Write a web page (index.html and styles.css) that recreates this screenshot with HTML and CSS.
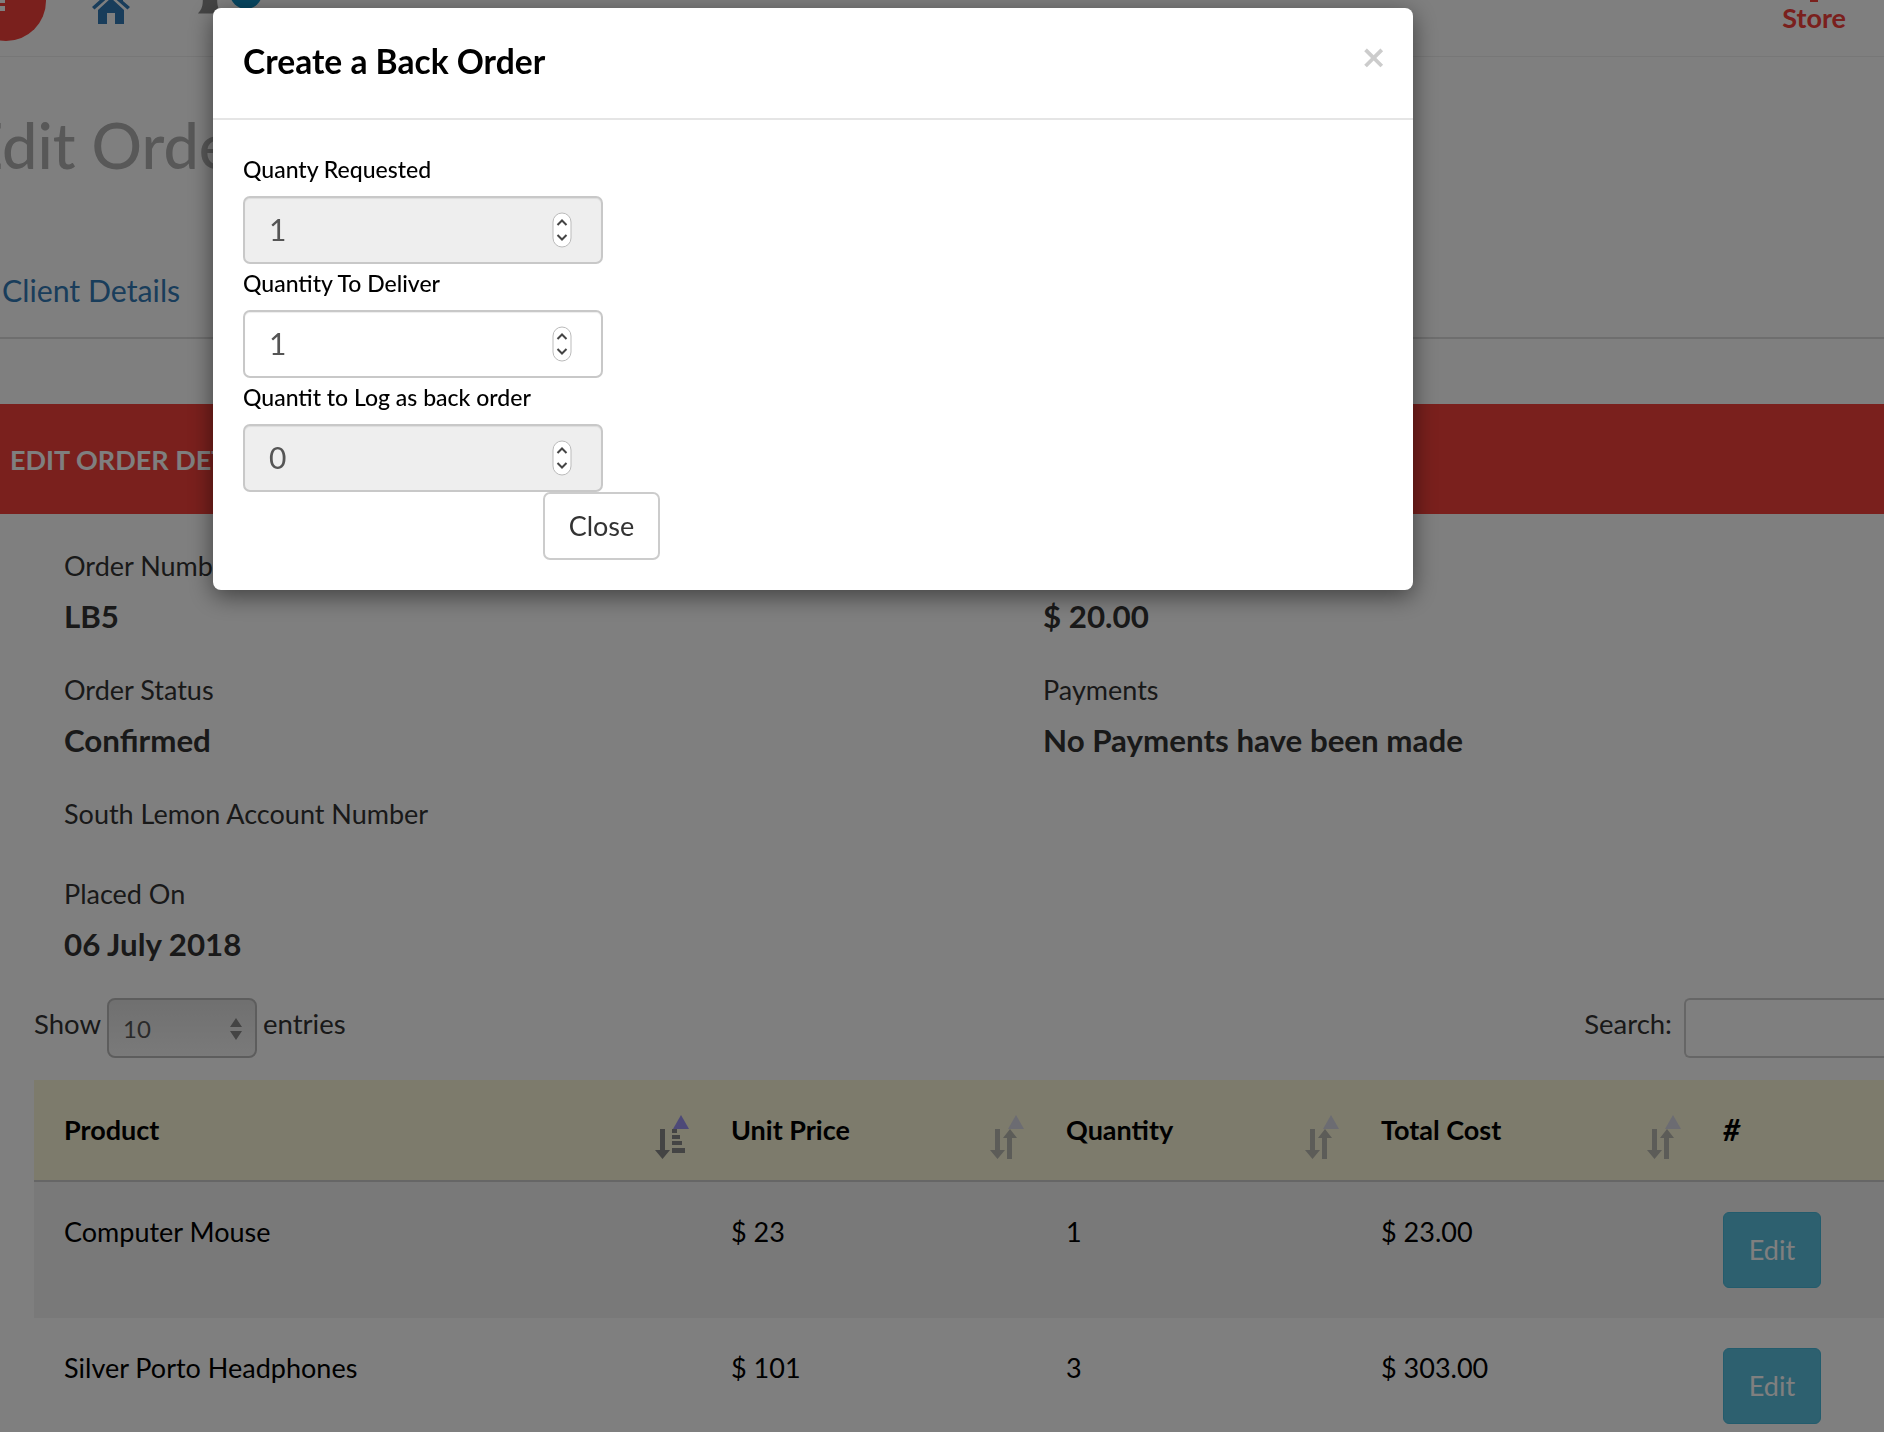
FILE: index.html
```html
<!DOCTYPE html>
<html lang="en">
<head>
<meta charset="utf-8">
<title>Edit Order</title>
<link rel="stylesheet" href="styles.css">
</head>
<body>
<div class="page">
  <header class="topbar">
    <div class="menu-btn"><span></span><span></span></div>
    <svg class="home" viewBox="0 0 38 34"><path fill="#337ab7" d="M19 0 0 17l2.500 2.500L19 5l16.500 14.500L38 17l-7-6V2h-5v4.500zM6 20v14h9V23h8v11h9V20L19 8z"/></svg>
    <svg class="bell" viewBox="0 0 30 40"><path fill="#8a8a8a" d="M15 0c-6 0-9 5-9 12 0 9-3 13-6 16h30c-3-3-6-7-6-16 0-7-3-12-9-12z"/></svg>
    <div class="badge"></div>
    <div class="store">Store</div>
  </header>

  <h1 class="page-title">Edit Order</h1>
  <nav class="tabs"><a class="tab">Client Details</a></nav>
  <div class="band">EDIT ORDER DETAILS</div>

  <section class="details">
    <div class="field"><div class="field-label">Order Number</div><div class="field-value">LB5</div></div>
    <div class="field"><div class="field-label">Order Total</div><div class="field-value">$ 20.00</div></div>
    <div class="field"><div class="field-label">Order Status</div><div class="field-value">Confirmed</div></div>
    <div class="field"><div class="field-label">Payments</div><div class="field-value">No Payments have been made</div></div>
    <div class="field field-empty"><div class="field-label">South Lemon Account Number</div></div>
    <div class="field field-wide"><div class="field-label">Placed On</div><div class="field-value">06 July 2018</div></div>
  </section>

  <div class="dt-controls">
    <label class="dt-length"><span class="dt-text">Show</span>
      <span class="select-wrap">
        <select class="select"><option>10</option></select>
        <svg class="select-arrows" viewBox="0 0 12 22"><path fill="#888" d="M6 0l6 9H0zM6 22l6-9H0z"/></svg>
      </span>
      <span class="dt-text">entries</span></label>
    <label class="dt-search"><span class="dt-text">Search:</span> <input class="search-input" type="text"></label>
  </div>

  <table class="orders">
    <colgroup><col class="c1"><col class="c2"><col class="c3"><col class="c4"><col class="c5"></colgroup>
    <thead>
      <tr>
        <th>Product
          <svg class="sort" viewBox="0 0 36 44"><path fill="#9a92f0" d="M26 0l8 14H18z"/><path fill="#888" d="M5 14h5v21h5L7.500 44 0 35h5z"/><path fill="#888" d="M17 14h5v4h-5zM17 20h8v4h-8zM17 26h10v4H17zM17 33h13v5H17z"/></svg>
        </th>
        <th>Unit Price <svg class="sort" viewBox="0 0 36 44"><use href="#s"/></svg></th>
        <th>Quantity <svg class="sort" viewBox="0 0 36 44"><use href="#s"/></svg></th>
        <th>Total Cost <svg class="sort" viewBox="0 0 36 44"><use href="#s"/></svg></th>
        <th class="hash">#</th>
      </tr>
    </thead>
    <tbody>
      <tr class="odd"><td>Computer Mouse</td><td>$ 23</td><td>1</td><td>$ 23.00</td><td><button class="edit">Edit</button></td></tr>
      <tr><td>Silver Porto Headphones</td><td>$ 101</td><td>3</td><td>$ 303.00</td><td><button class="edit">Edit</button></td></tr>
    </tbody>
  </table>
  <svg class="defs" width="0" height="0"><defs><g id="s"><path fill="#d8d8e4" d="M26 0l8 14H18z"/><path fill="#b8b8b0" d="M5 14h5v21h5L7.500 44 0 35h5zM22 44h-5V23h-4l7-9 7 9h-5z"/></g></defs></svg>
</div>

<div class="backdrop"></div>

<div class="modal">
  <div class="modal-header">
    <h4 class="modal-title">Create a Back Order</h4>
    <span class="close">×</span>
  </div>
  <div class="modal-body">
    <label class="label">Quanty Requested</label>
    <div class="num"><input class="input" type="text" value="1" disabled><svg class="spin" viewBox="0 0 20 36"><use href="#pill"/></svg></div>
    <label class="label">Quantity To Deliver</label>
    <div class="num"><input class="input" type="text" value="1"><svg class="spin" viewBox="0 0 20 36"><use href="#pill"/></svg></div>
    <label class="label">Quantit to Log as back order</label>
    <div class="num"><input class="input" type="text" value="0" disabled><svg class="spin" viewBox="0 0 20 36"><use href="#pill"/></svg></div>
    <div class="actions"><button class="btn-close">Close</button></div>
  </div>
  <svg class="defs" width="0" height="0"><defs><g id="pill"><rect x="1" y="1" width="18" height="34" rx="9" fill="#fff" stroke="#bbb"/><path fill="none" stroke="#444" stroke-width="2" d="M5.500 13 10 8.500l4.500 4.500M5.500 23l4.500 4.500 4.500-4.500"/></g></defs></svg>
</div>
</body>
</html>
```
FILE: styles.css
```css
* { box-sizing: border-box; }
html, body { margin: 0; height: 100%; overflow: hidden; }
body { font-family: Lato, "Open Sans", sans-serif; font-size: 24px; color: #333; background: #fff; }
.page { width: 1884px; height: 1432px; overflow: hidden; }

.topbar { display: flex; align-items: flex-end; height: 57px; border-bottom: 1px solid #eee; overflow: hidden; padding-bottom: 32px; }
.menu-btn { flex: none; width: 80px; height: 80px; margin-left: -34px; margin-bottom: -17px; border-radius: 50%; background: #f4403a; display: flex; flex-direction: column; justify-content: flex-end; gap: 3px; padding: 0 0 30px 20px; }
.menu-btn span { display: block; width: 19px; height: 5px; background: #fff; }
.home { flex: none; width: 38px; height: 34px; margin-left: 46px; }
.bell { flex: none; width: 24px; height: 34px; margin-left: 68px; }
.badge { flex: none; width: 32px; height: 32px; border-radius: 50%; background: #0f8ec4; margin-left: 8px; margin-bottom: 15px; }
.store { align-self: flex-start; margin-left: auto; margin-right: 38px; font-size: 27px; font-weight: 700; color: #f4403a; line-height: 32px; }
.store::before { content: ""; display: block; width: 8px; height: 2px; margin: 0 auto; background: #f4403a; }

.page-title { margin: 50px 0 0 -33px; font-size: 63px; font-weight: 500; color: #b0b0b0; line-height: 76px; }
.tabs { margin-top: 86px; height: 70px; border-bottom: 2px solid #ddd; padding-left: 2px; line-height: 42px; }
.tab { color: #337ab7; font-size: 30.300px; }
.band { margin-top: 65px; height: 110px; background: #f4403a; color: #fff; font-size: 27px; font-weight: 700; line-height: 112px; padding-left: 10px; }

.details { display: grid; grid-template-columns: 979px 1fr; padding: 34px 0 0 64px; }
.field { height: 124px; line-height: 36px; font-size: 27px; }
.field-label { color: #333; }
.field-value { margin-top: 14px; font-size: 31.300px; font-weight: 700; }
.field-empty { grid-column: 1 / -1; height: 80px; }
.field-wide { grid-column: 1 / -1; height: 122px; }

.dt-controls { display: flex; justify-content: space-between; align-items: center; padding: 0 0 0 34px; height: 60px; font-size: 27.500px; }
.dt-length { display: flex; align-items: center; gap: 6px; }
.dt-text { margin-top: -10px; }
.select-wrap { position: relative; display: block; width: 150px; height: 60px; }
.select { appearance: none; width: 100%; height: 60px; border: 2px solid #bbb; border-radius: 8px; background: linear-gradient(#e0e0e0, #f4f4f4); padding-left: 14px; font: inherit; font-size: 24px; color: #555; }
.select-arrows { position: absolute; right: 15px; top: 20px; width: 12px; height: 22px; }
.dt-search { display: flex; align-items: center; gap: 12px; }
.search-input { width: 200px; height: 60px; border: 2px solid #ccc; border-radius: 6px 0 0 6px; border-right: 0; background: #fff; }

.orders { margin: 22px 0 0 34px; width: 1850px; table-layout: fixed; border-collapse: collapse; font-size: 27px; }
.c1 { width: 667px; } .c2 { width: 335px; } .c3 { width: 315px; } .c4 { width: 342px; } .c5 { width: 191px; }
.orders th { position: relative; height: 101px; background: #faf6d8; color: #000; text-align: left; font-weight: 700; padding: 0 0 2px 30px; border-bottom: 2px solid #ccc; }
.orders th.hash { font-size: 30px; font-style: italic; }
.orders td { height: 137px; vertical-align: top; color: #000; padding: 30px 0 0 30px; line-height: 40px; }
.orders .odd td { background: #f2f2f2; }
.sort { position: absolute; right: 10px; top: 35px; width: 36px; height: 44px; }
.edit { display: block; width: 98px; height: 76px; border: 1px solid #46b8da; border-radius: 6px; background: #5bc0de; color: #fff; font: inherit; }
.defs { position: absolute; }

.backdrop { position: fixed; inset: 0; background: rgba(0, 0, 0, .5); }
.modal { position: fixed; left: 213px; top: 8px; width: 1200px; height: 582px; background: #fff; border-radius: 8px; box-shadow: 0 6px 24px rgba(0, 0, 0, .5); }
.modal-header { position: relative; height: 112px; border-bottom: 2px solid #e5e5e5; padding: 31px 30px 0; }
.modal-title { margin: 0; font-size: 33.600px; font-weight: 700; line-height: 44px; color: #000; }
.close { position: absolute; right: 26px; top: 27px; font-family: "DejaVu Sans", sans-serif; font-size: 32px; font-weight: 700; color: #ccc; line-height: 44px; }
.modal-body { padding: 30px 30px 0; }
.label { display: block; height: 46px; font-size: 23px; font-weight: 500; color: #000; line-height: 38px; }
.num { position: relative; width: 360px; height: 68px; }
.input { display: block; width: 100%; height: 100%; border: 2px solid #c8c8c8; border-radius: 7px; padding: 0 24px 2px; font: inherit; font-size: 30px; color: #555; background: #fff; outline: 0; box-shadow: inset 0 1px 1px rgba(0, 0, 0, .075); }
.input:disabled { background: #eee; }
.spin { position: absolute; right: 31px; top: 16px; width: 20px; height: 36px; }
.actions { width: 417px; display: flex; justify-content: flex-end; }
.btn-close { width: 117px; height: 68px; padding-bottom: 3px; background: #fff; border: 2px solid #ccc; border-radius: 7px; font: inherit; font-size: 27px; color: #333; }
```
